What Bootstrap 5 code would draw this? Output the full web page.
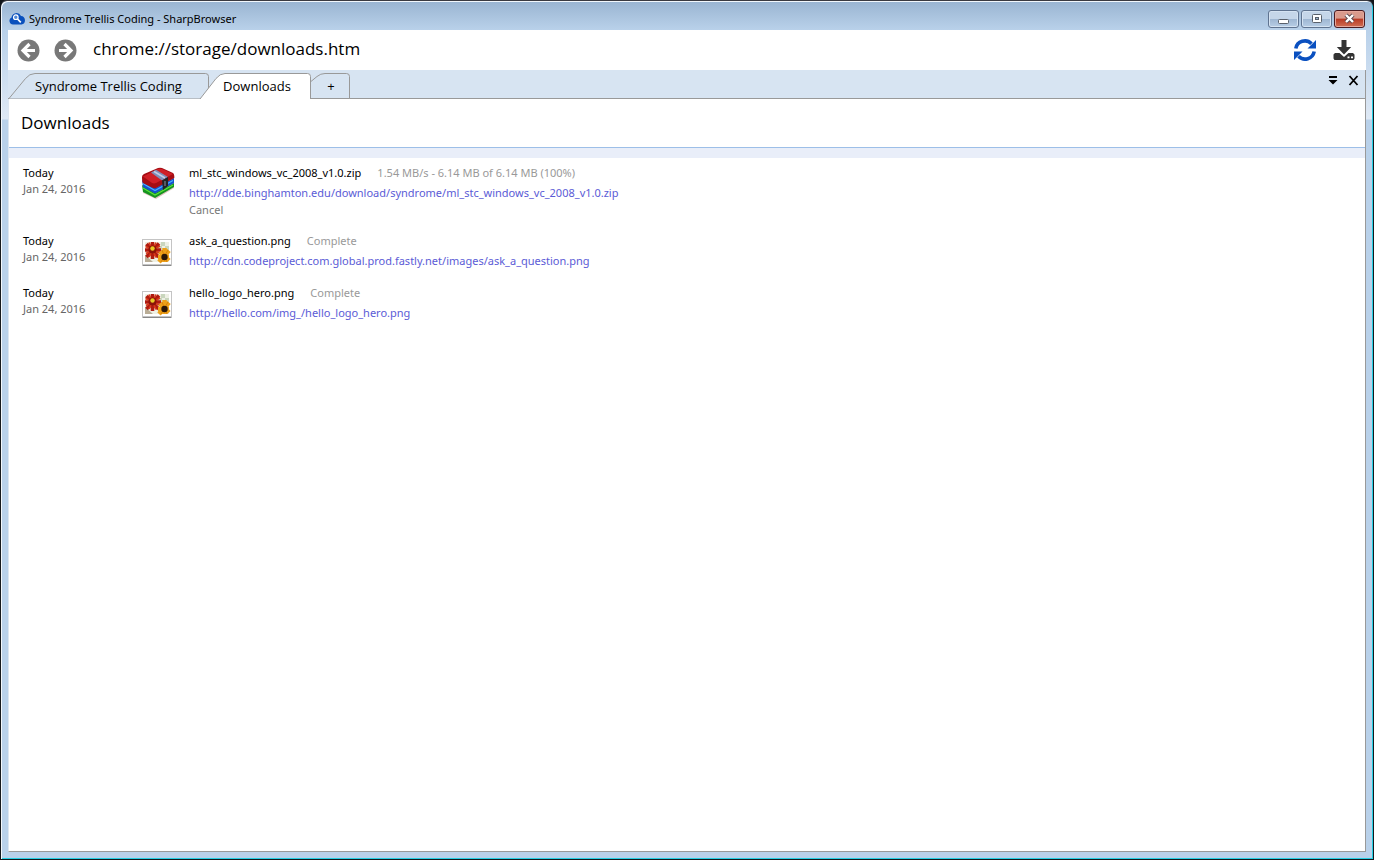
<!DOCTYPE html>
<html lang="en">
<head>
<meta charset="utf-8">
<meta name="viewport" content="width=device-width, initial-scale=1">
<title>Syndrome Trellis Coding - SharpBrowser</title>
<link href="https://cdn.jsdelivr.net/npm/bootstrap@5.3.0/dist/css/bootstrap.min.css" rel="stylesheet">
<style>
  body { font-family: "Noto Sans", "Open Sans", sans-serif; font-size: 11px; line-height: 16px; color: #000; background: #101418; }
  button { color: inherit; }
  .frame { border: 1px solid #15181c; border-top-color: #3a3a40; border-radius: 7px 7px 0 0; padding: 0 7px 7px 7px;
    box-shadow: inset 1px 1px 0 #f2f7fc, inset -1px -1px 0 #25cfe4;
    background: linear-gradient(#99b4d1, #b9d1ea 29px, #dfe9f5 118px, #b9d1ea 119px); }
  .titlebar { height: 29px; padding: 6px 1px 0 1px; }
  .win-buttons { gap: 2px; }
  .win-btn { width: 31px; height: 18px; border: 1px solid #5f7390; border-radius: 3px; box-shadow: inset 0 0 0 1px #d5e3f2;
    background: linear-gradient(#c5d6e9 48%, #9fb7d3 52%, #b7cde5); }
  .win-close { border-color: #4a1c22; box-shadow: inset 0 0 0 1px #e5a79b; background: linear-gradient(#d99a8c 45%, #b93a24 50%, #cf6f55); }
  .toolbar { height: 40px; padding: 0 11px 0 9px; }
  .nav-buttons { gap: 14px; }
  .address { font-family: "Open Sans", sans-serif; font-size: 17px; line-height: 24px; padding: 0 0 2px; }
  .tabstrip { height: 29px; background: #d7e4f2; border-bottom: 1px solid #999; border-right: 1px solid #999; }
  .tab { height: 26px; margin-bottom: -1px; font-family: "Open Sans", sans-serif; font-size: 13px; line-height: 24px; }
  .tab svg { position: absolute; inset: 0; }
  .tab-page { width: 201px; }
  .tab-active { width: 112px; margin-left: -10px; z-index: 1; }
  .tab-new { width: 42px; margin-left: -3px; }
  .page { border: 1px solid #999; border-width: 0 1px 1px 0; border-left: 1px solid #dde6f1; }
  .page-title { font-family: "Open Sans", sans-serif; font-size: 17px; line-height: 24px; padding: 12px; border-bottom: 1px solid #9dbfe8; }
  .band { height: 10px; background: #e9eef9; }
  .downloads { padding: 5px 14px; gap: 12px; }
  .date-col { width: 118px; padding-top: 2px; color: #666; }
  .icon-col { width: 48px; padding-top: 2px; }
  .line { line-height: 20px; }
  .gap-name { gap: 16px; }
  .state { color: #999; }
  .url { color: #5b5bd6; }
  .cancel { color: #777; line-height: 14px; padding-bottom: 2px; }
</style>
</head>
<body>
<div class="frame min-vh-100 d-flex flex-column">
  <header class="titlebar d-flex align-items-center">
    <svg class="me-1" width="16" height="16" viewBox="0 0 16 16" aria-hidden="true"><path d="M4 13.500a3.700 3.700 0 0 1-1.500-7A5 5 0 0 1 12 5a4.300 4.300 0 0 1 .5 8.500z" fill="#0a50bd"/><circle cx="6.800" cy="6.200" r="2.300" fill="#4f88d8" stroke="#fff" stroke-width="1.200"/><path d="M8.500 8l3.300 3.300" stroke="#fff" stroke-width="1.700"/></svg>
    <span class="flex-grow-1">Syndrome Trellis Coding - SharpBrowser</span>
    <div class="win-buttons d-flex">
      <button class="win-btn p-0 d-flex align-items-center justify-content-center" aria-label="Minimize"><svg width="13" height="12" viewBox="0 0 13 12"><rect x="1.500" y="6.500" width="10" height="4" rx="1" fill="#fff" stroke="#59606b"/></svg></button>
      <button class="win-btn p-0 d-flex align-items-center justify-content-center" aria-label="Maximize"><svg width="12" height="10" viewBox="0 0 12 10"><rect x="1.500" y=".5" width="9" height="8" rx="1" fill="#fff" stroke="#59606b"/><rect x="4.500" y="3.500" width="3" height="2" fill="#9bb3ce" stroke="#59606b"/></svg></button>
      <button class="win-btn win-close p-0 d-flex align-items-center justify-content-center" aria-label="Close window"><svg width="13" height="11" viewBox="0 0 13 11"><path d="M3 2l7 7M10 2L3 9" stroke="#59474d" stroke-width="4.200"/><path d="M3 2l7 7M10 2L3 9" stroke="#fff" stroke-width="2.400"/></svg></button>
    </div>
  </header>

  <div class="toolbar bg-white d-flex align-items-center">
    <div class="nav-buttons d-flex">
      <button class="btn border-0 p-0 d-flex" aria-label="Back"><svg width="23" height="23" viewBox="0 0 23 23"><circle cx="11.500" cy="11.500" r="11" fill="#787878"/><path d="M12.500 5L6 11.500l6.500 6.500M6.500 11.500H18" fill="none" stroke="#fff" stroke-width="3.200"/></svg></button>
      <button class="btn border-0 p-0 d-flex" aria-label="Forward"><svg width="23" height="23" viewBox="0 0 23 23"><circle cx="11.500" cy="11.500" r="11" fill="#787878"/><path d="M10.500 5l6.500 6.500-6.500 6.500M16.500 11.500H5" fill="none" stroke="#fff" stroke-width="3.200"/></svg></button>
    </div>
    <input class="address border-0 ms-3 flex-grow-1 bg-transparent" type="text" aria-label="Address" value="chrome://storage/downloads.htm">
    <button class="btn border-0 p-0 d-flex" aria-label="Reload"><svg width="24" height="24" viewBox="0 0 24 24"><g fill="none" stroke="#0a50c0" stroke-width="3.600"><path d="M2.800 10.500A9.200 9.200 0 0 1 18.500 5.800"/><path d="M21.200 13.500A9.200 9.200 0 0 1 5.500 18.200"/></g><path d="M23 2v8.500h-8.500zM1 22v-8.500h8.500z" fill="#0a50c0"/></svg></button>
    <button class="btn border-0 p-0 d-flex ms-3" aria-label="Downloads"><svg width="22" height="22" viewBox="0 0 22 22"><path d="M8.500 1h5v7h4.700L11 15.500 3.800 8h4.700zM2 14h4.500l4.500 4 4.500-4H20l1.500 1.500v4L20.500 21h-19L.5 19.500v-4z" fill="#333"/><path d="M14.500 17.500h2v1.800h-2zM18 17.500h2v1.800h-2z" fill="#fff"/></svg></button>
  </div>

  <div class="tabstrip d-flex align-items-end" role="tablist">
    <button class="tab tab-page position-relative border-0 bg-transparent p-0" role="tab" aria-selected="false"><svg width="201" height="26" viewBox="0 0 201 26"><path d="M1 25.500L17.500 5.500Q21.500.5 27 .5H197.500Q200.500.5 200.500 3.500V25.500" fill="#d7e4f2" stroke="#999"/></svg><span class="position-relative">Syndrome Trellis Coding</span></button>
    <button class="tab tab-active position-relative border-0 bg-transparent p-0" role="tab" aria-selected="true"><svg width="112" height="26" viewBox="0 0 112 26"><path d="M1 26L17 5.500Q21 .5 26 .5H108.500Q111.500.5 111.500 3.500V26" fill="#fff" stroke="#999"/></svg><span class="position-relative ms-1">Downloads</span></button>
    <button class="tab tab-new position-relative border-0 bg-transparent p-0" aria-label="New tab"><svg width="42" height="26" viewBox="0 0 42 26"><path d="M.5 25.500V10.500L9 3.500Q12.500.5 17 .5H38.500Q41.500.5 41.500 3.500V25.500z" fill="#d7e4f2" stroke="#999"/></svg><span class="position-relative ms-1">+</span></button>
    <div class="ms-auto align-self-start d-flex pt-1 pe-1">
      <button class="btn border-0 p-0 d-flex me-2" aria-label="Tab list"><svg width="12" height="12" viewBox="0 0 12 12"><path d="M1 2h8v2H1zM.5 6h9L5 10.500z"/></svg></button>
      <button class="btn border-0 p-0 d-flex" aria-label="Close tab"><svg width="13" height="13" viewBox="0 0 13 13"><path d="M1.500 2l8 9M9.500 2l-8 9" stroke="#000" stroke-width="1.800"/></svg></button>
    </div>
  </div>

  <main class="page bg-white flex-grow-1">
    <h1 class="page-title m-0 fw-normal">Downloads</h1>
    <div class="band"></div>
    <ul class="downloads list-unstyled m-0 d-flex flex-column">
      <li class="d-flex">
        <div class="date-col"><div class="text-black">Today</div><div>Jan 24, 2016</div></div>
        <div class="icon-col"><svg width="34" height="34" viewBox="0 -1 34 34" aria-hidden="true">
          <path d="M2 16v11l13 6 18-11V11z" fill="#c99" opacity=".6"/>
          <path d="M1 19l13 8 19-10v4L14 32 2 26z" fill="#14951f"/><path d="M2 22l12 7 18-10" fill="none" stroke="#5ce23a" stroke-width="1.200"/>
          <path d="M1 14l13 8 19-10v5L14 27.500 2 21z" fill="#1352cf"/><path d="M2 17.500l12 7 18-10" fill="none" stroke="#4bb1ff" stroke-width="1.200"/>
          <path d="M1 11q0-2 2-3L17 2q2-.6 4 0l11 5q1.500 1 1.300 5L15 22q-2 .6-4-.4L2 17q-1-1-1-6z" fill="#a50d13"/>
          <path d="M2 10.500L17 3q2-.7 4 0l11 5-17 9q-2 .8-4 0z" fill="#d01f26"/>
          <path d="M10 6.500l5-2.800L27 11l-6 3.500z" fill="#7e8fb8"/><path d="M13 5.500L24 12" stroke="#c3cde4" stroke-width="1.500"/>
          <path d="M21 14.500l6-3.500v9L22 24z" fill="#222327"/><path d="M24 15v5" stroke="#8892a5"/>
        </svg></div>
        <div>
          <div class="line d-flex gap-name"><span>ml_stc_windows_vc_2008_v1.0.zip</span><span class="state">1.54 MB/s - 6.14 MB of 6.14 MB (100%)</span></div>
          <div class="line"><a class="url text-decoration-none" href="#">http://dde.binghamton.edu/download/syndrome/ml_stc_windows_vc_2008_v1.0.zip</a></div>
          <div class="cancel"><a class="text-reset text-decoration-none" href="#">Cancel</a></div>
        </div>
      </li>
      <li class="d-flex">
        <div class="date-col"><div class="text-black">Today</div><div>Jan 24, 2016</div></div>
        <div class="icon-col"><svg width="34" height="34" viewBox="0 0 34 34" aria-hidden="true"><defs><g id="flowers">
          <rect x="1.500" y="7" width="29" height="26" fill="#888"/><rect x="1.500" y="6.500" width="29" height="25" fill="#fff" stroke="#c4c4c4"/>
          <path d="M4 9h24v20H4z" fill="#eef0e4"/><path d="M20 9h4v4h-4zM24 13h4v4h-4zM16 13h5v5h-5z" fill="#c9d6bd"/><path d="M4 22l8 7H4z" fill="#b9ad96"/>
          <g stroke="#b01a10" stroke-width="3.600"><path d="M11.500 9v17M4 17h16M5.500 11l12 13M18 10.500L5.500 24"/></g><path d="M8 9.500l7 15M15 9.500L8 24M4.500 13.500l15 7M19 13l-14 7.500" stroke="#d9381a" stroke-width="1.700"/>
          <circle cx="11.500" cy="16.500" r="4" fill="#8b1209"/><circle cx="11.500" cy="15.500" r="2.200" fill="#e8c926"/>
          <path d="M23.500 15v14M17 24h11M19 18.500l9 9M28 17.500L18 29" stroke="#eda018" stroke-width="4.500"/><path d="M21 17l5 12M27 17l-7 12" stroke="#d98008"/>
          <circle cx="23.500" cy="24" r="3.200" fill="#2b1707"/></g></defs><use href="#flowers"/></svg></div>
        <div>
          <div class="line d-flex gap-name"><span>ask_a_question.png</span><span class="state">Complete</span></div>
          <div class="line"><a class="url text-decoration-none" href="#">http://cdn.codeproject.com.global.prod.fastly.net/images/ask_a_question.png</a></div>
        </div>
      </li>
      <li class="d-flex">
        <div class="date-col"><div class="text-black">Today</div><div>Jan 24, 2016</div></div>
        <div class="icon-col"><svg width="34" height="34" viewBox="0 0 34 34" aria-hidden="true"><use href="#flowers"/></svg></div>
        <div>
          <div class="line d-flex gap-name"><span>hello_logo_hero.png</span><span class="state">Complete</span></div>
          <div class="line"><a class="url text-decoration-none" href="#">http://hello.com/img_/hello_logo_hero.png</a></div>
        </div>
      </li>
    </ul>
  </main>
</div>
<script src="https://cdn.jsdelivr.net/npm/bootstrap@5.3.0/dist/js/bootstrap.bundle.min.js"></script>
</body>
</html>
